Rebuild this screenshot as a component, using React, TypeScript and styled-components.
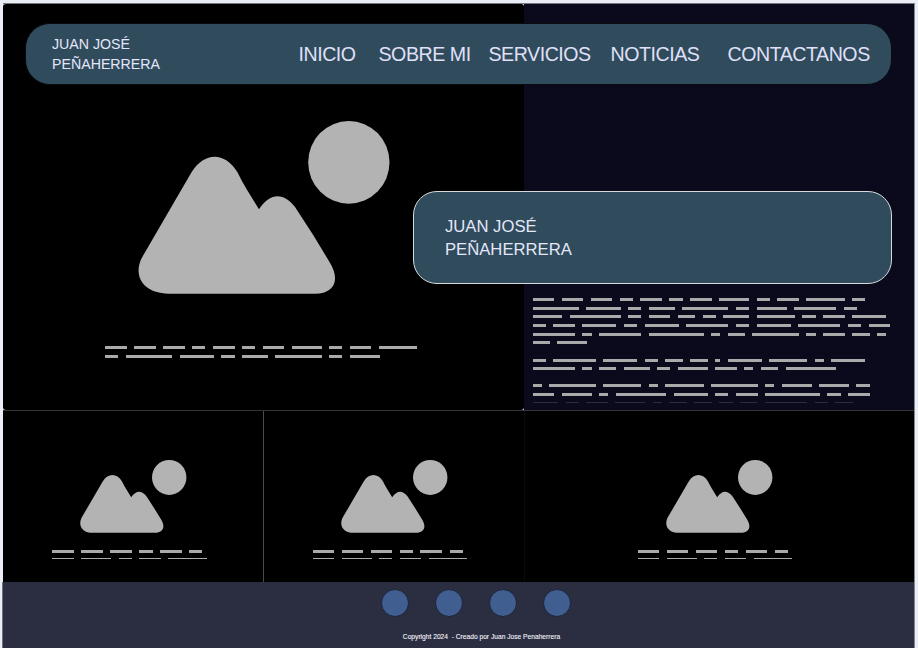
import React from 'react';
import styled, { createGlobalStyle } from 'styled-components';

const GlobalStyle = createGlobalStyle`
  * { box-sizing: border-box; }
  body {
    margin: 0;
    background: #fff;
    font-family: "Liberation Sans", Arial, sans-serif;
  }
`;

const Page = styled.div`
  width: 918px;
  height: 648px;
  padding: 3px 3px 0 3px;
  background: #ebeff5;
`;

const Frame = styled.div`
  width: 912px;
  height: 645px;
  display: grid;
  grid-template-rows: 407px 172px 66px;
  border-right: 1px solid #85868e;
`;

const Hero = styled.section`
  position: relative;
  display: grid;
  grid-template-columns: 521px 390px;
  border-top: 1px solid #77787e;
`;

const HeroMedia = styled.div`
  display: grid;
  background: #d8dade;
`;

const HeroImage = styled.div`
  display: flex;
  flex-direction: column;
  padding: 117px 0 0 134.6px;
  border-radius: 3px;
  background: #000;
`;

const HeroCaption = styled.div`
  margin: 52px 0 0 -32.6px;
`;

const HeroText = styled.div`
  padding: 294px 0 0 8.5px;
  background: #0b091c;
`;

const Header = styled.header`
  position: absolute;
  top: 19px;
  left: 21.5px;
  width: 867.5px;
  height: 62px;
  padding: 0 20.5px 0 26.5px;
  display: flex;
  align-items: center;
  justify-content: space-between;
  border: 1px solid #060b12;
  border-radius: 25px;
  background: #2f4b5c;
`;

const Name = styled.div<{ $size: number; $line: number }>`
  font-size: ${(p) => p.$size}px;
  line-height: ${(p) => p.$line}px;
  color: #e4e6fa;
`;

const Nav = styled.nav`
  display: flex;
  align-items: center;
`;

const NavItem = styled.a<{ $gap: number; $width: number }>`
  width: ${(p) => p.$width}px;
  margin-left: ${(p) => p.$gap}px;
  font-size: 19.6px;
  letter-spacing: -0.46px;
  line-height: 24px;
  white-space: nowrap;
  color: #e0e0fa;
`;

const NameCard = styled.div`
  position: absolute;
  top: 187px;
  left: 410px;
  width: 479px;
  height: 93px;
  padding: 0 31px;
  display: flex;
  align-items: center;
  border: 1px solid #d5dadd;
  border-radius: 24px;
  background: #2f4b5c;
`;

const Gallery = styled.section`
  display: grid;
  grid-template-columns: 261px 261px 389px;
  border-top: 1px solid #333;
  background: #000;
`;

const Tile = styled.article<{ $line: string; $left: number }>`
  padding: 49px 0 0 ${(p) => p.$left}px;
  border-right: 1px solid ${(p) => p.$line};
`;

const TileCaption = styled.div`
  margin: 17px 0 0 -28px;
`;

const Drawing = styled.svg<{ $w: number; $h: number }>`
  display: block;
  overflow: visible;
  width: ${(p) => p.$w}px;
  height: ${(p) => p.$h}px;
  fill: #b3b3b3;
`;

const BarRow = styled.div<{ $gap: number }>`
  display: flex;
  gap: 7.4px;
  margin-bottom: ${(p) => p.$gap}px;
`;

const Bar = styled.span<{ $chars: number; $thin?: boolean; $dim?: boolean }>`
  flex: none;
  width: ${(p) => p.$chars * 4.153 + 0.9}px;
  height: ${(p) => (p.$thin ? 1 : 3)}px;
  background: ${(p) => (p.$dim ? '#2d2b39' : '#aaa')};
`;

const Footer = styled.footer`
  display: flex;
  flex-direction: column;
  align-items: center;
  padding: 7px 0 0 0;
  margin-left: -1px;
  border-left: 1px solid #70717d;
  background: #2b2d40;
`;

const Socials = styled.div`
  display: flex;
  gap: 26px;
  margin-left: 35px;
`;

const Social = styled.a`
  width: 28px;
  height: 28px;
  border: 1px solid #1c2438;
  border-radius: 50%;
  background: #405e90;
`;

const Copyright = styled.p`
  margin: 16px 0 0 46px;
  font-size: 6.67px;
  line-height: 8px;
  white-space: pre;
  color: #f4f4fc;
  -webkit-text-stroke: 0.1px #f4f4fc;
`;

type Line = { words: number[]; gap: number; thin?: boolean; dim?: boolean };

const heroLines: Line[] = [
  { words: [5, 5, 5, 3, 5, 3, 5, 7, 3, 5, 9], gap: 6 },
  { words: [3, 11, 8, 3, 6, 11, 3, 7], gap: 0 },
];

const tileLines: Line[] = [
  { words: [5, 5, 5, 3, 5, 3], gap: 5 },
  { words: [5, 7, 3, 5, 9], gap: 0, thin: true },
];

const aboutLines: Line[] = [
  { words: [5, 5, 5, 3, 5, 3, 5, 7, 3, 5, 9, 3], gap: 6 },
  { words: [11, 8, 3, 6, 11, 3, 7, 10, 3], gap: 5 },
  { words: [7, 12, 3, 5, 4, 3, 6, 9, 3, 5, 8], gap: 6 },
  { words: [3, 5, 8, 3, 8, 10, 3, 8, 10, 3, 5], gap: 6 },
  { words: [10, 2, 10, 13, 2, 4, 11, 2, 5, 4, 2], gap: 5 },
  { words: [4, 7], gap: 15 },
  { words: [3, 10, 8, 3, 4, 4, 1, 8, 9, 2, 8], gap: 5 },
  { words: [10, 2, 4, 6, 3, 7, 5, 2, 4, 12], gap: 14 },
  { words: [2, 11, 9, 2, 9, 11, 2, 7, 7, 3], gap: 6 },
  { words: [5, 7, 2, 12, 8, 3, 5, 13, 3, 5], gap: 6 },
  { words: [6, 3, 5, 7, 2, 4, 4, 3, 4, 10, 3, 4], gap: 0, thin: true, dim: true },
];

const navItems = [
  { label: 'INICIO', gap: 0, width: 57 },
  { label: 'SOBRE MI', gap: 23, width: 93 },
  { label: 'SERVICIOS', gap: 17, width: 104 },
  { label: 'NOTICIAS', gap: 18, width: 91 },
  { label: 'CONTACTANOS', gap: 26, width: 143 },
];

function TextBars({ lines }: { lines: Line[] }) {
  return (
    <>
      {lines.map((line, i) => (
        <BarRow key={i} $gap={line.gap}>
          {line.words.map((n, j) => (
            <Bar key={j} $chars={n} $thin={line.thin} $dim={line.dim} />
          ))}
        </BarRow>
      ))}
    </>
  );
}

function Landscape({ w, h }: { w: number; h: number }) {
  return (
    <Drawing $w={w} $h={h} viewBox="0 0 755 519" preserveAspectRatio="none" aria-hidden>
      <ellipse cx="632.5" cy="124" rx="122" ry="124" />
      <path d="M161 153C200 92 260 92 298 153Q312 182 326 205L363 265C396 215 436 213 471 258L526 343L574 422C609 478 588 518 531 518H91C24 518 -14 474 8 418Q11 411 15 404Z" />
    </Drawing>
  );
}

export default function App() {
  return (
    <>
      <GlobalStyle />
      <Page>
        <Frame>
          <Hero>
            <HeroMedia>
              <HeroImage>
                <Landscape w={251.7} h={173} />
                <HeroCaption>
                  <TextBars lines={heroLines} />
                </HeroCaption>
              </HeroImage>
            </HeroMedia>
            <HeroText>
              <TextBars lines={aboutLines} />
            </HeroText>
            <Header>
              <Name $size={14.2} $line={20}>JUAN JOSÉ<br />PEÑAHERRERA</Name>
              <Nav>
                {navItems.map((item) => (
                  <NavItem key={item.label} $gap={item.gap} $width={item.width}>{item.label}</NavItem>
                ))}
              </Nav>
            </Header>
            <NameCard>
              <Name $size={16.67} $line={23}>JUAN JOSÉ<br />PEÑAHERRERA</Name>
            </NameCard>
          </Hero>
          <Gallery>
            <Tile $line="#494949" $left={77.1}>
              <Landscape w={106.5} h={73} />
              <TileCaption><TextBars lines={tileLines} /></TileCaption>
            </Tile>
            <Tile $line="#0b0b0d" $left={76.6}>
              <Landscape w={106.5} h={73} />
              <TileCaption><TextBars lines={tileLines} /></TileCaption>
            </Tile>
            <Tile $line="#000" $left={140.7}>
              <Landscape w={106.5} h={73} />
              <TileCaption><TextBars lines={tileLines} /></TileCaption>
            </Tile>
          </Gallery>
          <Footer>
            <Socials>
              <Social /><Social /><Social /><Social />
            </Socials>
            <Copyright>{'Copyright 2024  - Creado por Juan Jose Penaherrera'}</Copyright>
          </Footer>
        </Frame>
      </Page>
    </>
  );
}
